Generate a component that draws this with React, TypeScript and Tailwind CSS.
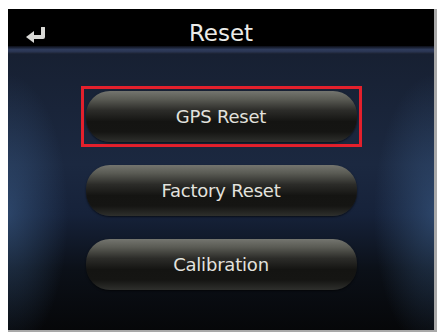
import React from "react";

function Btn({ label, selected }: { label: string; selected?: boolean }) {
  return (
    <div
      className={
        "w-[281px] h-[61px] px-[2px] py-[2px] border-[3px] " +
        (selected ? "border-[#e3202c]" : "border-transparent")
      }
    >
      <div className="w-full h-full rounded-[24px] bg-[linear-gradient(to_bottom,#74756f_0%,#5a5b54_16%,#2c2c29_38%,#141412_60%,#151513_80%,#2e2f2c_100%)] shadow-[0_1px_2px_rgba(0,0,0,0.6)] flex items-center justify-center">
        <span className="text-[18px] leading-none text-[#e2e2de] font-['DejaVu_Sans',sans-serif] tracking-[-0.2px]">
          {label}
        </span>
      </div>
    </div>
  );
}

export default function App() {
  return (
    <div className="w-[437px] h-[332px] bg-white pt-[9px] pl-[8px]">
      <div className="w-[429px] h-[323px] border-r-[3px] border-b-2 border-[#a9a9a9] bg-[#0c0f15] flex flex-col overflow-hidden">
        <div className="h-[37px] bg-black flex items-start pt-[10px] relative shrink-0">
          <svg
            className="absolute left-[16px] top-[18px]"
            width="24"
            height="17"
            viewBox="0 0 24 17"
          >
            <path
              d="M19 1 V10 H9"
              fill="none"
              stroke="#d9d9d6"
              strokeWidth="4"
              strokeLinejoin="round"
              strokeLinecap="round"
            />
            <path d="M2 10 L10 4 L10 16 Z" fill="#d9d9d6" />
          </svg>
          <div className="w-full text-center text-[23px] leading-[28px] text-[#ebebe8] font-['DejaVu_Sans',sans-serif]">
            Reset
          </div>
        </div>
        <div className="h-[8px] shrink-0 bg-[linear-gradient(to_bottom,#0a0d16,#2f3c5c_45%,#2a3552_70%,#19202f)]" />
        <div className="flex-1 flex flex-col items-center gap-[13px] pt-[32px] bg-[radial-gradient(ellipse_60px_140px_at_0%_58%,rgba(70,110,160,0.45),rgba(70,110,160,0)),radial-gradient(ellipse_60px_140px_at_100%_58%,rgba(70,110,160,0.45),rgba(70,110,160,0)),linear-gradient(to_bottom,#172032,#1b2840_40%,#16223a_58%,#0b1018_78%,#060709)]">
          <Btn label="GPS Reset" selected />
          <Btn label="Factory Reset" />
          <Btn label="Calibration" />
        </div>
      </div>
    </div>
  );
}
